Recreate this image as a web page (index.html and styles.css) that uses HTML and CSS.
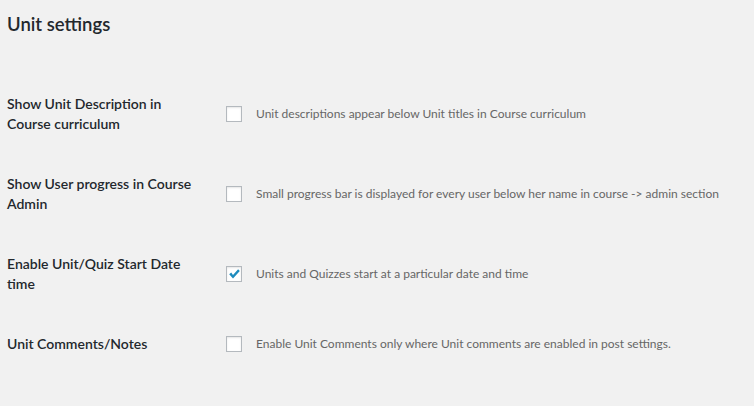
FILE: index.html
```html
<!DOCTYPE html>
<html>
<head>
<meta charset="utf-8">
<link rel="stylesheet" href="styles.css">
</head>
<body>
<div class="wrap">
  <h1 class="title">Unit settings</h1>
  <div class="form-table">
    <div class="row">
      <div class="label">Show Unit Description in Course curriculum</div>
      <div class="field"><span class="cb"></span><span class="desc">Unit descriptions appear below Unit titles in Course curriculum</span></div>
    </div>
    <div class="row">
      <div class="label">Show User progress in Course Admin</div>
      <div class="field"><span class="cb"></span><span class="desc">Small progress bar is displayed for every user below her name in course -&gt; admin section</span></div>
    </div>
    <div class="row">
      <div class="label">Enable Unit/Quiz Start Date time</div>
      <div class="field"><span class="cb checked"><svg viewBox="0 0 16 16" width="16" height="16"><path d="M3.2 8.2 L5.2 6.6 L7 8.9 L12.1 3.2 L13.8 4.9 L7 12.4 Z" fill="#1e8cbe"/></svg></span><span class="desc">Units and Quizzes start at a particular date and time</span></div>
    </div>
    <div class="row">
      <div class="label">Unit Comments/Notes</div>
      <div class="field"><span class="cb"></span><span class="desc">Enable Unit Comments only where Unit comments are enabled in post settings.</span></div>
    </div>
  </div>
</div>
</body>
</html>
```
FILE: styles.css
```css
html, body {
  margin: 0;
  padding: 0;
  background: #f1f1f1;
}
body {
  font-family: Lato, "Open Sans", sans-serif;
  color: #23282d;
}
.wrap {
  padding: 0 0 0 7px;
}
.title {
  margin: 0;
  padding-top: 12px;
  font-size: 18.5px;
  line-height: 25px;
  font-weight: 600;
  color: #23282d;
}
.form-table {
  margin-top: 37px;
}
.row {
  display: grid;
  grid-template-columns: 210px 1fr;
  align-items: center;
  padding: 20px 0;
}
.label {
  width: 200px;
  font-size: 14px;
  line-height: 20px;
  font-weight: 600;
  color: #23282d;
}
.field {
  display: flex;
  align-items: center;
  padding-left: 9px;
}
.cb {
  box-sizing: border-box;
  width: 16px;
  height: 16px;
  flex: none;
  border: 1px solid #b4b9be;
  background: #fff;
  box-shadow: inset 0 1px 2px rgba(0,0,0,0.1);
  margin-right: 14px;
  position: relative;
}
.cb svg {
  position: absolute;
  left: -1px;
  top: -1px;
}
.desc {
  font-size: 12px;
  line-height: 18px;
  color: #666;
}
```
